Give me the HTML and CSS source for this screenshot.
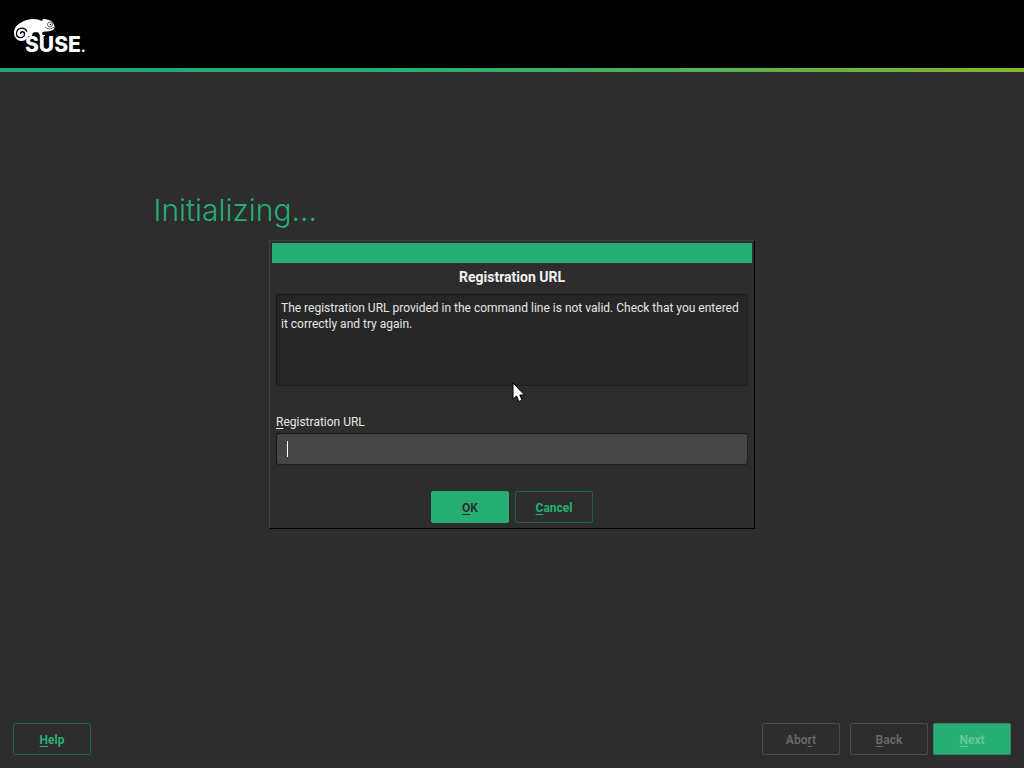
FILE: index.html
```html
<!DOCTYPE html>
<html lang="en">
<head>
<meta charset="utf-8">
<title>Installer</title>
<link rel="stylesheet" href="styles.css">
</head>
<body class="installer">
<header class="banner">
  <svg class="logo" width="74" height="38" viewBox="0 0 74 38" role="img" aria-label="SUSE">
    <path fill="#fff" d="M1 15C1 8 7 4 14 2C19 0 25 1 29 3L30 1C34 1 38 2 40 5C42 8 42 11 40 12C36 14 32 13 30 14C28.500 15 29 16 30 17H32V18H27L25.500 14.500C23 14 20 14 19.500 15.500L19 18H15L14 16L12 18Z"/>
    <circle cx="8.500" cy="15.500" r="7.500" fill="#fff"/>
    <path d="M14 13.500C11 8 3.500 10 3.500 15.500C3.500 21 11.500 21 11.500 16C11.500 13 7.500 13 7.500 16" fill="none" stroke="#000" stroke-width="1.300"/>
    <circle cx="37" cy="6.500" r="2.500" fill="#fff" stroke="#000" stroke-width=".6"/>
    <circle cx="37.500" cy="6.500" r=".8"/>
    <path d="M32 9C35 11.500 38 11.500 41 9" fill="none" stroke="#000" stroke-width=".6"/>
    <text class="wordmark" x="12" y="34">SUSE<tspan class="mark">.</tspan></text>
  </svg>
</header>
<main class="stage">
  <h1 class="status">Initializing...</h1>
</main>
<footer class="actions">
  <button class="button help" type="button"><u>H</u>elp</button>
  <button class="button abort" type="button" disabled>Abo<u>r</u>t</button>
  <button class="button" type="button" disabled><u>B</u>ack</button>
  <button class="button primary next" type="button" disabled><u>N</u>ext</button>
</footer>
<div class="overlay">
  <form class="dialog" role="dialog" aria-labelledby="dialog-title">
    <div class="titlebar"></div>
    <div class="content">
      <h2 class="title" id="dialog-title">Registration URL</h2>
      <p class="message">The registration URL provided in the command line is not valid. Check that you entered it correctly and try again.</p>
      <label class="label" for="url"><u>R</u>egistration URL</label>
      <div class="field">
        <input class="input" id="url" type="text">
        <span class="caret"></span>
      </div>
      <div class="choices">
        <button class="button primary" type="submit"><u>O</u>K</button>
        <button class="button" type="button"><u>C</u>ancel</button>
      </div>
    </div>
  </form>
</div>
<svg class="pointer" width="14" height="22" viewBox="0 0 14 22" aria-hidden="true">
  <path d="M1 1V17L4.500 14L7 19.500L10 18L7.800 13H12.500Z" fill="#fff" stroke="#000" stroke-width="1"/>
</svg>
</body>
</html>
```
FILE: styles.css
```css
* { box-sizing: border-box; }

.installer {
  margin: 0;
  min-height: 100vh;
  display: flex;
  flex-direction: column;
  background: #2d2d2d;
  color: #e6e6e6;
  font: 12px/16px Roboto, "Liberation Sans", sans-serif;
}

.banner {
  height: 72px;
  padding: 18px 13px 0;
  background: #000;
  border-bottom: 4px solid;
  border-image: linear-gradient(90deg, #22a37a, #27ae74 40%, #86b52c) 1;
}

.logo { display: block; }

.wordmark {
  fill: #fff;
  font: 800 21px Inter, sans-serif;
}

.mark { font-size: 14px; }

.stage {
  flex: 1;
  padding: 118px 15% 0;
}

.status {
  margin: 0;
  color: #27ae74;
  font: 300 30px/40px Inter, "Open Sans", sans-serif;
}

.actions {
  display: flex;
  padding: 0 13px 13px;
}

.button {
  width: 78px;
  height: 32px;
  padding: 2px 0 0;
  border: 1px solid #1a6347;
  border-radius: 2px;
  background: transparent;
  color: #27ae74;
  font: bold 12px/16px Roboto, "Liberation Sans", sans-serif;
}

.button:disabled {
  border-color: #4b4b4b;
  color: #666;
}

.button.primary {
  border-color: #27ae74;
  background: #27ae74;
  color: #2d2d2d;
}

.button.primary:disabled {
  border-color: #3d7f62;
  color: #67c69a;
}

.help { margin-right: auto; }
.abort { margin-right: 10px; }
.next { margin-left: 5px; }

u { text-underline-offset: 2px; text-decoration-thickness: 1px; text-decoration-skip-ink: none; }

.overlay {
  position: absolute;
  inset: 0;
  display: flex;
  align-items: center;
  justify-content: center;
}

.dialog {
  width: 486px;
  max-width: 100%;
  padding: 2px;
  border: 1px solid;
  border-color: #404040 #000 #000 #404040;
  background: #2d2d2d;
}

.titlebar {
  height: 20px;
  background: #27ae74;
}

.content { padding: 4px 4px 3px; }

.title {
  margin: 0 0 7px;
  color: #f2f2f2;
  font-size: 14px;
  line-height: 20px;
  text-align: center;
}

.message {
  min-height: 92px;
  margin: 0 0 28px;
  padding: 5px 4px;
  border: 1px solid #202020;
  border-top-color: #191919;
  border-left-color: #191919;
  border-radius: 3px;
  background: #262626;
}

.label {
  display: block;
  margin-bottom: 3px;
}

.field { position: relative; }

.input {
  display: block;
  width: 100%;
  height: 32px;
  padding: 0 10px;
  border: 1px solid #202020;
  border-top-color: #171717;
  border-left-color: #171717;
  border-radius: 3px;
  background: #454545;
  color: #eee;
  font: inherit;
  outline: none;
}

.caret {
  position: absolute;
  left: 11px;
  top: 8px;
  width: 1px;
  height: 16px;
  background: #fff;
}

.choices {
  display: flex;
  justify-content: center;
  gap: 6px;
  margin-top: 26px;
}

.pointer {
  position: absolute;
  left: 50%;
  top: 382px;
}
```
